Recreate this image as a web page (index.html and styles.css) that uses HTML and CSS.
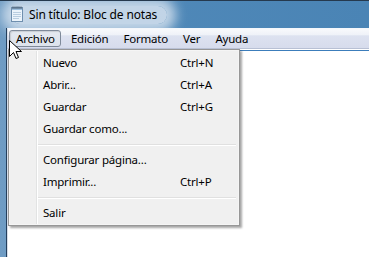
FILE: index.html
```html
<!DOCTYPE html>
<html lang="es">
<head>
    <meta charset="UTF-8">
    <title>Sin título: Bloc de notas</title>
    <link rel="stylesheet" href="styles.css">
</head>
<body>
    <div class="window">
        <div class="titlebar">
            <div class="title-glow">
                <svg class="app-icon" width="12" height="16" viewBox="0 0 12 16">
                    <rect x="0.5" y="1.5" width="11" height="14" fill="#eaf3fb" stroke="#6f8fae"/>
                    <rect x="1" y="2" width="10" height="2" fill="#9cc0e0"/>
                    <path d="M2 0.5v2.5M4 0.5v2.5M6 0.5v2.5M8 0.5v2.5M10 0.5v2.5" stroke="#4a5b6c" stroke-width="1"/>
                    <path d="M2 6.5h8M2 8.5h8M2 10.5h8M2 12.5h6" stroke="#b8cde0" stroke-width="1"/>
                </svg>
                <span class="title">Sin título: Bloc de notas</span>
            </div>
        </div>
        <div class="client">
            <div class="menubar">
                <span class="menu-item open">Archivo</span>
                <span class="menu-item">Edición</span>
                <span class="menu-item">Formato</span>
                <span class="menu-item">Ver</span>
                <span class="menu-item">Ayuda</span>
            </div>
            <div class="edit"></div>
        </div>

        <div class="dropdown">
            <div class="entry"><span>Nuevo</span><span class="key">Ctrl+N</span></div>
            <div class="entry"><span>Abrir...</span><span class="key">Ctrl+A</span></div>
            <div class="entry"><span>Guardar</span><span class="key">Ctrl+G</span></div>
            <div class="entry"><span>Guardar como...</span><span class="key"></span></div>
            <div class="sep"></div>
            <div class="entry"><span>Configurar página...</span><span class="key"></span></div>
            <div class="entry"><span>Imprimir...</span><span class="key">Ctrl+P</span></div>
            <div class="sep"></div>
            <div class="entry"><span>Salir</span><span class="key"></span></div>
        </div>

        <svg class="cursor" width="13" height="21" viewBox="0 0 13 21">
            <path d="M0.5 0.5V16.5L4.5 12.5L7 18.5L9.5 17.5L7 11.5H12.5Z" fill="#fff" stroke="#000" stroke-width="1" stroke-linejoin="miter"/>
        </svg>
    </div>
</body>
</html>
```

FILE: styles.css
```css
html, body {
    margin: 0;
    padding: 0;
}
body {
    font-family: "Noto Sans", "Open Sans", sans-serif;
    font-size: 11.5px;
    letter-spacing: -0.2px;
    color: #000;
    background: #fff;
}
.window {
    position: relative;
    width: 369px;
    height: 257px;
    overflow: hidden;
    display: flex;
    flex-direction: column;
    background: linear-gradient(90deg, #6f9cc4 0, #4f88b8 40%, #4a84b5 100%);
    border-top: 1px solid #25394e;
    box-sizing: border-box;
}
.titlebar {
    height: 27px;
    display: flex;
    align-items: center;
    padding-left: 11px;
    flex-shrink: 0;
}
.title-glow {
    display: flex;
    align-items: center;
    gap: 6px;
    height: 18px;
    padding-right: 10px;
    background: rgba(214, 226, 238, 0.85);
    box-shadow: 0 0 12px 9px rgba(214, 226, 238, 0.85);
    border-radius: 10px;
}
.app-icon {
    display: block;
    margin-top: -1px;
}
.title {
    font-size: 12px;
    letter-spacing: -0.15px;
    line-height: 16px;
}
.client {
    flex: 1;
    display: flex;
    flex-direction: column;
    margin-left: 6px;
    border-left: 1px solid #243f5c;
}
.menubar {
    height: 19px;
    display: flex;
    align-items: center;
    padding-left: 1px;
    border-top: 1px solid #f4f7fb;
    border-bottom: 1px solid #b8c0d4;
    border-left: 1px solid #d6dde8;
    background: linear-gradient(180deg, #f8f9fc 0, #eff2f8 30%, #dde2f0 36%, #d7dcec 100%);
}
.menu-item {
    height: 17px;
    line-height: 16px;
    padding: 0 6px 0 7px;
    box-sizing: border-box;
    border: 1px solid transparent;
    border-radius: 3px;
}
.menu-item.open {
    padding: 0 5px 0 6px;
    margin-right: 2px;
    border-color: #7f8a9a;
    background: linear-gradient(180deg, #e4e9f0 0, #dde3ec 100%);
    box-shadow: inset 1px 1px 1px rgba(0, 0, 0, 0.12);
}
.edit {
    flex: 1;
    background: #fff;
    border-top: 1px solid #fff;
    box-shadow: inset 0 1px 0 #3c7dbb;
    border-left: 1px solid #d6dde8;
}
.dropdown {
    position: absolute;
    left: 8px;
    top: 48px;
    width: 232px;
    padding: 2px 2px 1px 2px;
    box-sizing: border-box;
    border: 1px solid #979797;
    background: linear-gradient(90deg, #f0f0f0 0, #f0f0f0 27px, #e2e3e3 27px, #e2e3e3 28px, #fff 28px, #fff 29px, #f0f0f0 29px);
    box-shadow: 2px 2px 2px rgba(0, 0, 0, 0.35), inset 0 0 0 1px #f5f5f5;
}
.entry {
    height: 22px;
    display: grid;
    grid-template-columns: 1fr 57px;
    align-items: center;
    padding-left: 32px;
    line-height: 16px;
}
.key {
    white-space: nowrap;
}
.sep {
    height: 0;
    margin: 4px 1px 3px 27px;
    border-top: 1px solid #e0e0e0;
    border-bottom: 1px solid #fff;
}
.cursor {
    position: absolute;
    left: 9px;
    top: 39px;
}
```
